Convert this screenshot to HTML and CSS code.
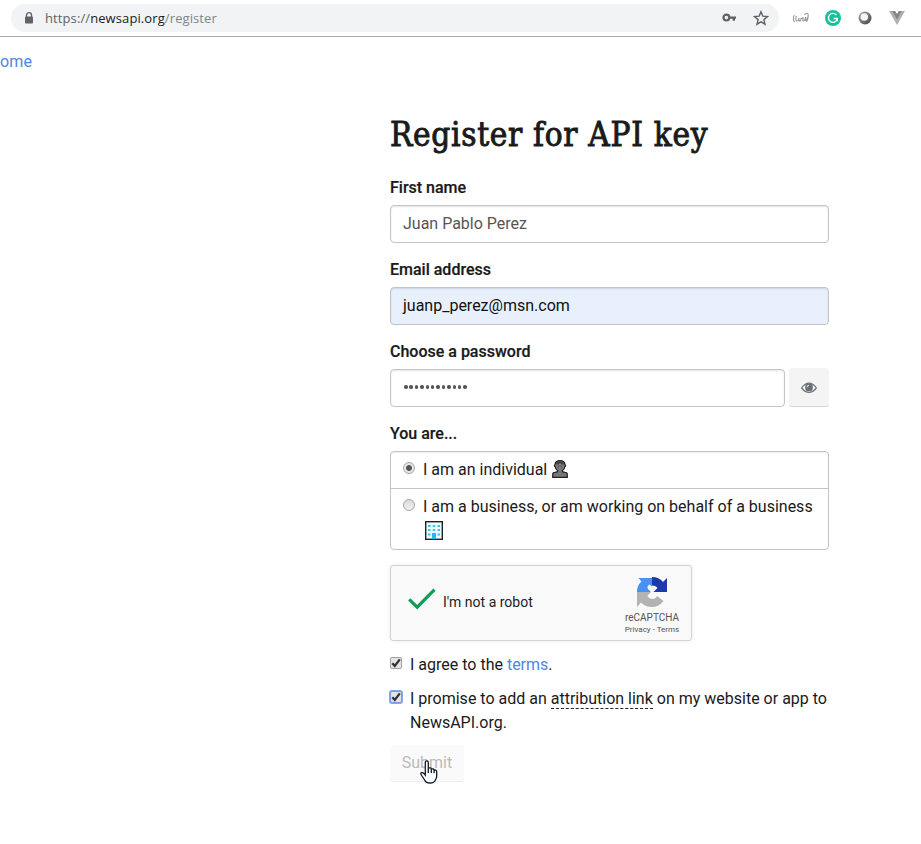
FILE: index.html
```html
<!DOCTYPE html>
<html lang="en">
<head>
<meta charset="utf-8">
<title>Register for API key</title>
<link rel="stylesheet" href="styles.css">
</head>
<body>
<header class="toolbar">
  <div class="omnibox">
    <svg class="lock" width="10" height="13" viewBox="0 0 10 13"><path d="M2.5 5V3.2a2.5 2.5 0 0 1 5 0V5" fill="none" stroke="#5f6368" stroke-width="1.3"/><rect x="1" y="4.6" width="8" height="7" rx="1" fill="#5f6368"/></svg>
    <div class="url"><span class="scheme">https://</span><span class="host">newsapi.org</span><span class="path">/register</span></div>
    <svg class="key" width="15" height="10" viewBox="0 0 15 10"><circle cx="4.4" cy="4.6" r="2.9" fill="none" stroke="#5f6368" stroke-width="2.2"/><path d="M8 4.6h6M11.8 4.6v3.2" fill="none" stroke="#5f6368" stroke-width="2.4"/></svg>
    <svg class="star" width="16" height="16" viewBox="0 0 16 16"><path d="M8 1.8l1.8 4.3 4.7.4-3.6 3.1 1.1 4.6L8 11.8l-4 2.4 1.1-4.6L1.5 6.5l4.7-.4z" fill="none" stroke="#5f6368" stroke-width="1.4"/></svg>
  </div>
  <svg class="ext-a" width="17" height="12" viewBox="0 0 17 12"><path d="M2.500 3Q.2 6 2.500 10M4.500 4Q3 7 4.500 9q2 .5 2.500-3v3q2 .5 2-2.500h2M11 5v4q2 .5 2.500-4v3.500q1.500 0 2-3.500M12.500 3Q14.500.5 16 2q.7 4-1.500 8" fill="none" stroke="#999" stroke-width="1.100"/></svg>
  <svg class="ext-g" width="16" height="16" viewBox="0 0 16 16"><circle cx="8" cy="8" r="8" fill="#15c39a"/><path d="M11.400 5A4.500 4.500 0 1 0 12.300 9M8.700 8.500h3.600v2.800" fill="none" stroke="#fff" stroke-width="1.4"/></svg>
  <svg class="ext-o" width="14" height="14" viewBox="0 0 14 14"><defs><linearGradient id="ring" x1="0" y1="0" x2="1" y2="1"><stop offset="0" stop-color="#aaa"/><stop offset="1" stop-color="#444"/></linearGradient></defs><circle cx="7" cy="7" r="6.500" fill="url(#ring)"/><circle cx="6.300" cy="6" r="3.800" fill="#f5f5f5"/></svg>
  <svg class="ext-v" width="16" height="14" viewBox="0 0 16 14"><path d="M0 0h6l2 3 2-3h6L8 14z" fill="#b0b0b0"/><path d="M3.200 0H6l2 3.200L10 0h2.800L8 8.500z" fill="#858585"/></svg>
</header>
<nav class="nav"><a>ome</a></nav>
<main class="form">
  <h1>Register for API key</h1>
  <section class="group"><label>First name</label><div class="input muted">Juan Pablo Perez</div></section>
  <section class="group"><label>Email address</label><div class="input filled">juanp_perez@msn.com</div></section>
  <section class="group"><label>Choose a password</label>
    <div class="pass-row">
      <div class="input dots"><i></i><i></i><i></i><i></i><i></i><i></i><i></i><i></i><i></i><i></i><i></i><i></i></div>
      <div class="eye"><svg width="16" height="12" viewBox="0 0 16 12"><path d="M.6 6Q8-3.600 15.400 6 8 14.800.6 6z" fill="#fff" stroke="#6b7078" stroke-width="1.200"/><circle cx="8" cy="5.400" r="3.900" fill="#6b7078"/><path d="M6 5.300A2 2 0 0 1 8 3.300" fill="none" stroke="#eee" stroke-width="1"/></svg></div>
    </div>
  </section>
  <section class="group"><label>You are...</label>
    <div class="choices">
      <div class="choice"><span class="radio on"></span><p>I am an individual <svg class="person" width="16" height="18" viewBox="0 0 16 18"><path d="M.7 17.300v-3q0-2 2.300-2l2.600-.6v-1.200Q3.500 9.500 3.300 7 1.500 6 3 4.600 3.200.8 8 .7q4.800.1 5 3.900 1.500 1.400-.3 2.400-.2 2.500-2.300 3.500v1.200l2.600.6q2.300 0 2.300 2v3z" fill="#777" stroke="#222" stroke-width="1.200"/><path d="M3.500 4.700Q4 1 8 1q4 0 4.500 3.700Q9 4.500 8 3.200 6.500 4.600 3.500 4.700z" fill="#444"/><path d="M6 6.200h1M9.200 6.200h1" stroke="#333"/></svg></p></div>
      <div class="choice last"><span class="radio"></span><p>I am a business, or am working on behalf of a business<br><svg class="building" width="18" height="19" viewBox="0 0 18 19"><rect x=".7" y=".7" width="16.600" height="17.600" fill="#effaff" stroke="#222" stroke-width="1.400"/><path d="M3 4h2.500v2H3zM7.700 4h2.500v2H7.700zM12.500 4H15v2h-2.500zM3 8h2.500v2H3zM7.700 8h2.500v2H7.700zM12.500 8H15v2h-2.500zM3 12.500h2.500v2H3zM12.500 12.500H15v2h-2.500z" fill="#35c8ef"/><path d="M7 12h4v6H7z" fill="#28b9ec"/></svg></p></div>
    </div>
  </section>
  <div class="captcha">
    <svg class="tick" width="28" height="22" viewBox="0 0 28 22"><path d="M1.200 11.400l8 7.800L26.500 1.700" fill="none" stroke="#0f9d58" stroke-width="3.200"/></svg>
    <span class="robot">I'm not a robot</span>
    <div class="brand">
      <svg width="32" height="32" viewBox="0 0 32 32"><path d="M1 16Q1 9 5.500 5.500L2.500 2H16v8.500l-2.500-2Q10.500 10 12 13l3 3z" fill="#4a90f0"/><path d="M16 1q7 0 11 5l4-4v14H17.500l4-4Q20 9.500 16 9.500z" fill="#1c3aa9"/><path d="M1 16h14l-3.500 3.600Q13 23 16.500 23q3 0 4.500-3l6.500 5Q23 31 16 31 9.500 31 5 26.500L1 31z" fill="#b3b3b3"/></svg>
      <b>reCAPTCHA</b><small>Privacy - Terms</small>
    </div>
  </div>
  <div class="agree"><span class="check"><svg width="10" height="10" viewBox="0 0 10 10"><path d="M1.300 5.200l2.500 2.700 5-6.500" fill="none" stroke="#333" stroke-width="2.300"/></svg></span><p>I agree to the <a>terms</a>.</p></div>
  <div class="agree promise"><span class="check focus"><svg width="10" height="10" viewBox="0 0 10 10"><path d="M1.300 5.200l2.500 2.700 5-6.500" fill="none" stroke="#333" stroke-width="2.300"/></svg></span><p>I promise to add an <u>attribution link</u> on my website or app to NewsAPI.org.</p></div>
  <div class="submit">Submit
    <svg class="cursor" width="18" height="24" viewBox="0 0 18 24"><path d="M5.300 15V2.600q0-1.700 1.500-1.700t1.500 1.700v5.600q2.700-1 3 .9 2.300-.8 2.700 1 2.700-.5 2.700 1.700v4q0 2.500-1.300 4.200-1.200 3-5.400 3-4 0-5.200-2.800L1 14.500q-.7-1.600.7-2 1.500-.2 3.600 2.500zM8.300 8v5M11.300 9v4M14.100 10.200v3" fill="#fff" stroke="#111a2a" stroke-width="1.300"/></svg>
  </div>
</main>
</body>
</html>
```
FILE: styles.css
```css
* { box-sizing: border-box; }
body { margin: 0; height: 844px; overflow: hidden; background: #fff; color: #1a1a1a; font: 16px/24px Roboto, sans-serif; }
h1, p { margin: 0; }
svg { display: block; flex: none; }
a { color: #4f86e5; }
.toolbar { height: 37px; border-bottom: 1px solid #aaa; display: flex; align-items: center; }
.omnibox { width: 768px; height: 28px; margin-left: 11px; padding: 0 10px 0 13px; border-radius: 14px; background: #f1f3f4; display: flex; align-items: center; }
.url { margin-left: 11px; flex: 1; font: 13px/20px "Open Sans", sans-serif; letter-spacing: .1px; color: #80868b; white-space: nowrap; }
.scheme { color: #5f6368; }
.host { color: #202124; }
.key { margin-right: 16px; }
.ext-a { margin-left: 13px; }
.ext-g { margin-left: 16px; }
.ext-o { margin-left: 17px; }
.ext-v { margin-left: 17px; }
.nav { height: 24px; margin-top: 13px; letter-spacing: .2px; }
.form { width: 439px; margin-left: 390px; padding-top: 34px; }
h1 { height: 54px; margin-bottom: 13px; font: 500 33px/54px "DejaVu Serif Condensed", "DejaVu Serif", serif; font-stretch: condensed; white-space: nowrap; -webkit-text-stroke: .9px #1a1a1a; letter-spacing: .7px; }
.group { margin-bottom: 14px; }
label { display: block; height: 24px; padding-top: 1px; margin-bottom: 6px; font-weight: 500; -webkit-text-stroke: .2px #1a1a1a; }
.input { height: 38px; padding: 0 12px; border: 1px solid #c4c4c4; border-radius: 4px; line-height: 35px; box-shadow: inset 0 1px 2px #0000001c; }
.muted { color: #555; }
.filled { background: #e8f0fe; color: #111; }
.pass-row { display: flex; gap: 4px; }
.dots { width: 395px; display: flex; gap: 1.900px; align-items: center; padding: 0 13px 2px; }
.dots i { width: 3.500px; height: 3.500px; border-radius: 50%; background: #555; }
.eye { width: 40px; height: 39px; margin-top: -1px; padding-top: 1px; background: #f4f4f4; border-radius: 3px; border-bottom: 1px solid #d4d4d4; display: grid; place-items: center; }
.choices { height: 99px; border: 1px solid #c4c4c4; border-radius: 4px; box-shadow: inset 0 1px 1px #00000012; }
.choice { display: flex; height: 37px; padding: 6px 12px 0; border-bottom: 1px solid #c4c4c4; white-space: nowrap; }
.choice.last { height: 60px; border: 0; }
.radio { flex: none; width: 12px; height: 12px; margin: 4px 8px 0 0; border: 1px solid #a5a5a5; border-radius: 50%; background: linear-gradient(#ddd, #eee); }
.radio.on { background: radial-gradient(circle, #555 0 2.500px, #e8e8e8 3.400px); }
.person { display: inline-block; vertical-align: -3px; margin-left: 1px; }
.building { margin: 2px 0 0 2px; }
.captcha { width: 302px; height: 76px; margin-top: 15px; padding: 0 11px 0 17px; border: 1px solid #d3d3d3; border-radius: 3px; background: #f9f9f9; box-shadow: 0 0 4px #00000014; display: flex; align-items: center; }
.tick { margin-top: -8px; }
.robot { margin-left: 7px; font-size: 14px; color: #222; margin-top: -2px; }
.brand { margin-left: auto; width: 56px; display: flex; flex-direction: column; align-items: center; color: #555; white-space: nowrap; }
.brand svg { margin-top: 5px; }
.brand b { font: 10px/10px Roboto, sans-serif; margin-top: 5px; }
.brand small { font: 8px/10px Roboto, sans-serif; margin-top: 2px; }
.agree { display: flex; margin-top: 12px; }
.agree.promise { margin-top: 10px; }
.check { flex: none; width: 12px; height: 12px; margin: 4px 8px 0 0; border: 1px solid #a0a0a0; border-radius: 2px; background: #e4e4e4; }
.check.focus { border-color: #7b9bdc; box-shadow: 0 0 0 1px #83a9ef; }
u { text-decoration: none; border-bottom: 1px dashed #222; }
.submit { position: relative; width: 74px; height: 37px; margin-top: 10px; line-height: 36px; text-align: center; color: #bbb; background: #fafafa; border-radius: 3px; border-bottom: 1px solid #eee; }
.cursor { position: absolute; left: 30px; top: 15px; }
```
